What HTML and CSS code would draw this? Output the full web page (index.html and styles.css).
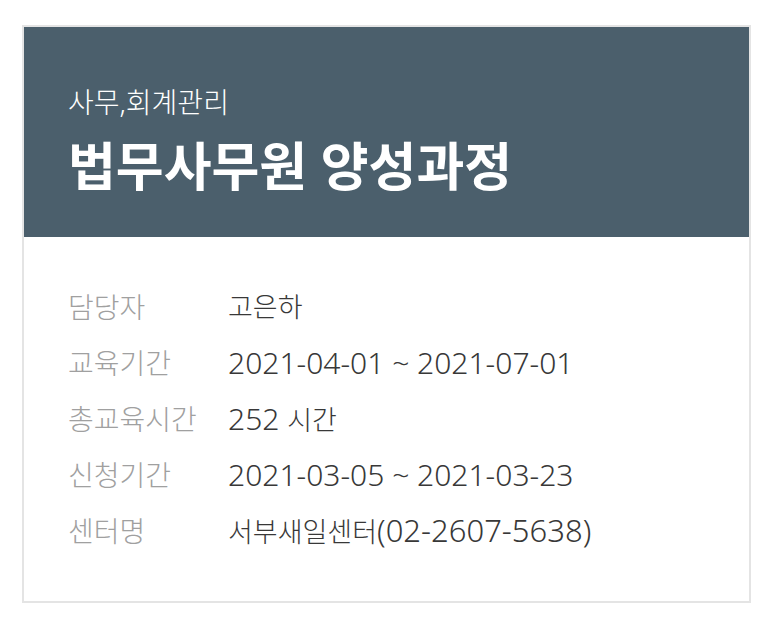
FILE: index.html
```html
<!DOCTYPE html>
<html lang="ko">
<head>
<meta charset="utf-8">
<link rel="stylesheet" href="styles.css">
</head>
<body>
<div class="card">
  <div class="card-head">
    <div class="category">사무,회계관리</div>
    <div class="title">법무사무원 양성과정</div>
  </div>
  <dl class="info">
    <div class="row"><dt>담당자</dt><dd>고은하</dd></div>
    <div class="row"><dt>교육기간</dt><dd><span class="num">2021-04-01 ~ 2021-07-01</span></dd></div>
    <div class="row"><dt>총교육시간</dt><dd><span class="num">252 </span>시간</dd></div>
    <div class="row"><dt>신청기간</dt><dd><span class="num">2021-03-05 ~ 2021-03-23</span></dd></div>
    <div class="row"><dt>센터명</dt><dd>서부새일센터<span class="num phone">(02-2607-5638)</span></dd></div>
  </dl>
</div>
</body>
</html>
```
FILE: styles.css
```css
html, body {
  margin: 0;
  padding: 0;
  background: #ffffff;
}
body {
  font-family: "Noto Sans", "Noto Sans CJK KR", sans-serif;
  padding: 25px 22px 0 22px;
}
.card {
  width: 729px;
  box-sizing: border-box;
  border: 2px solid #e4e4e4;
  background: #ffffff;
}
.card-head {
  background: #4b5f6c;
  height: 210px;
  box-sizing: border-box;
  padding: 56px 0 0 44px;
  color: #ffffff;
}
.category {
  font-size: 28px;
  line-height: 38px;
  font-weight: 300;
}
.title {
  margin-top: 13px;
  font-size: 52px;
  line-height: 64px;
  font-weight: 700;
}
.info {
  margin: 0;
  padding: 42px 0 42px 44px;
}
.row {
  display: flex;
  align-items: center;
  height: 56px;
  font-size: 27px;
  line-height: 40px;
  font-weight: 300;
}
.row dt {
  width: 160px;
  color: #a0a0a0;
  font-size: 28px;
  font-weight: 300;
}
.row dd {
  margin: 0;
  color: #383838;
}
.num {
  font-size: 30px;
}
.phone {
  font-size: 31px;
}
```
